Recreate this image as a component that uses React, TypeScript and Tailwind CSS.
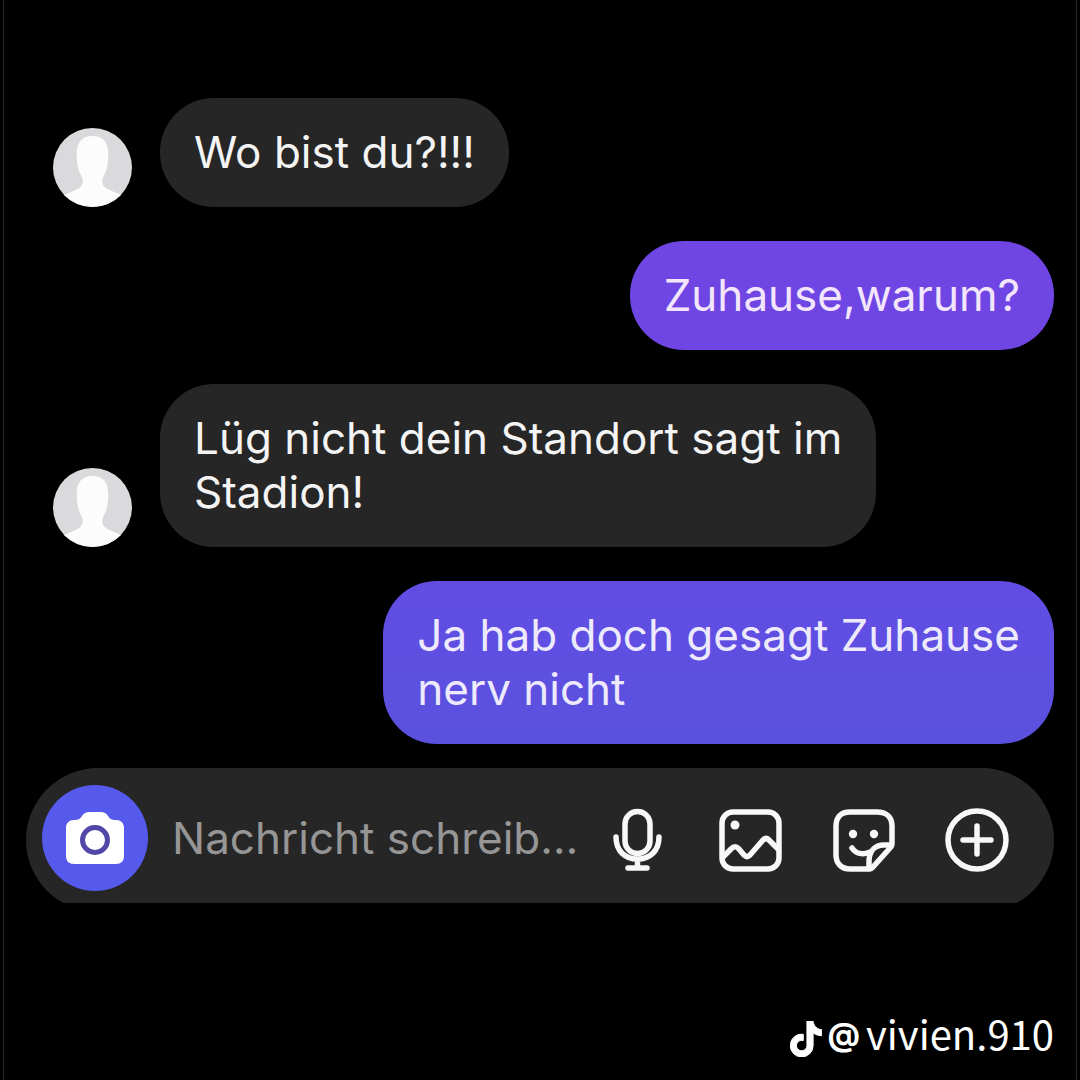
import { FaTiktok } from 'react-icons/fa6'

type Message = {
  id: number
  text: string
  mine: boolean
  color: string
}

const MESSAGES: Message[] = [
  { id: 1, mine: false, text: 'Wo bist du?!!!', color: 'bg-[#262626] text-[#f4f4f4]' },
  { id: 2, mine: true, text: 'Zuhause,warum?', color: 'bg-[#6f46e4] text-[#f3e6fc]' },
  { id: 3, mine: false, text: 'Lüg nicht dein Standort sagt im\nStadion!', color: 'bg-[#262626] text-[#f4f4f4]' },
  { id: 4, mine: true, text: 'Ja hab doch gesagt Zuhause\nnerv nicht', color: 'bg-linear-to-b from-[#624de4] to-[#5a51de] text-[#eeeafd]' },
]

function Avatar() {
  return (
    <svg viewBox="0 0 80 80" className="size-[79px] shrink-0 rounded-full bg-[#dadadd]" aria-hidden="true">
      <path
        d="M40 8C29 8 24 15 24 26c0 11 2 18 5 23 3 7 0 11-7 14-6 3-11 4-14 8v9h64v-9c-3-4-8-5-14-8-7-3-10-7-7-14 3-5 5-12 5-23C56 15 51 8 40 8Z"
        fill="#fcfcfd"
      />
    </svg>
  )
}

function CameraIcon() {
  return (
    <svg viewBox="0 0 58 52" className="h-[52px] w-[58px]" aria-hidden="true">
      <path
        d="M23 0h12c3 0 5 1 7 4 2 3 4 4 7 4h1c5 0 8 3 8 8v28c0 5-3 8-8 8H8c-5 0-8-3-8-8V16c0-5 3-8 8-8h1c3 0 5-1 7-4 2-3 4-4 7-4Z"
        fill="#fff"
      />
      <circle cx="29" cy="28" r="12.5" fill="none" stroke="#5047a8" strokeWidth="5" />
    </svg>
  )
}

const iconProps = {
  viewBox: '0 0 64 64',
  className: 'size-16',
  fill: 'none',
  stroke: '#f8f8f8',
  strokeWidth: 5.5,
  strokeLinecap: 'round' as const,
  strokeLinejoin: 'round' as const,
  'aria-hidden': true,
}

function MicIcon() {
  return (
    <svg {...iconProps}>
      <rect x="19" y="3.5" width="25" height="42" rx="12.5" />
      <path d="M10 29c0 14 9 22 21.5 22S53 43 53 29M31.500 51v8M22 60h19" />
    </svg>
  )
}

function ImageIcon() {
  return (
    <svg {...iconProps}>
      <rect x="3" y="4" width="57" height="57" rx="11" />
      <circle cx="16" cy="17" r="4.5" fill="#f8f8f8" stroke="none" />
      <path d="M4 49l8-8c3-3 5-3 8 0l5 6c2 2 4 2 6 0l13-15c2-2 4-2 6 0l9 9" />
    </svg>
  )
}

function StickerIcon() {
  return (
    <svg {...iconProps}>
      <path d="M38 61H18C9 61 4 55 4 47V18C4 9 9 4 18 4h27c9 0 15 5 15 14v18c0 2-1 3-2 4L41 59c-1 1-2 2-3 2Z" />
      <path d="M37 60v-6c0-11 6-17 15-17h7M20 40c4 6 11 7 18 4" />
      <circle cx="21" cy="26" r="4.2" fill="#f8f8f8" stroke="none" />
      <circle cx="42" cy="26" r="4.2" fill="#f8f8f8" stroke="none" />
    </svg>
  )
}

function PlusIcon() {
  return (
    <svg {...iconProps}>
      <circle cx="32" cy="32" r="29" />
      <path d="M32 18v28M18 32h28" />
    </svg>
  )
}

const ACTIONS = [
  { label: 'Sprachnachricht', Icon: MicIcon },
  { label: 'Galerie', Icon: ImageIcon },
  { label: 'Sticker', Icon: StickerIcon },
  { label: 'Mehr', Icon: PlusIcon },
]

export default function App() {
  return (
    <div className="bg-black font-['Inter',sans-serif] text-[44px] leading-[54px]">
      <main className="mx-[3px] flex min-h-screen flex-col border-x border-[#292929] px-[22px] pt-[98px] pb-2">
        <div className="flex flex-col gap-[34px] pl-[27px]">
          {MESSAGES.map(m => (
            <div key={m.id} className={`flex items-end gap-7 ${m.mine ? 'justify-end' : 'justify-start'}`}>
              {!m.mine && <Avatar />}
              <p className={`rounded-[54px] px-[34px] pt-[27px] pb-7 whitespace-pre-line ${m.color}`}>{m.text}</p>
            </div>
          ))}
        </div>

        {/* Composer, its lower edge is clipped */}
        <div className="mt-6 h-[135px] overflow-hidden">
          <form
            onSubmit={e => e.preventDefault()}
            className="flex h-[144px] items-center rounded-full bg-[#262626] pr-[45px] pl-4">
            <button
              type="button"
              aria-label="Kamera"
              className="mb-1 flex size-[106px] shrink-0 items-center justify-center rounded-full bg-[#555aec]">
              <CameraIcon />
            </button>
            <input
              type="text"
              aria-label="Nachricht"
              placeholder="Nachricht schreib…"
              className="mb-1 ml-6 min-w-0 flex-1 bg-transparent outline-none placeholder:text-[#969696]"
            />
            <div className="flex shrink-0 gap-[49px]">
              {ACTIONS.map(({ label, Icon }) => (
                <button key={label} type="button" aria-label={label}>
                  <Icon />
                </button>
              ))}
            </div>
          </form>
        </div>

        {/* Watermark */}
        <footer className="mt-auto flex items-center justify-end gap-[6px] text-white">
          <FaTiktok className="h-9 w-8 stroke-white stroke-[14]" aria-hidden="true" />
          <span className="pb-2 text-[32px] font-bold">@</span>
          <span className="pb-3 font-['Noto_Sans_CJK_SC',sans-serif] text-[40px]">vivien.910</span>
        </footer>
      </main>
    </div>
  )
}
